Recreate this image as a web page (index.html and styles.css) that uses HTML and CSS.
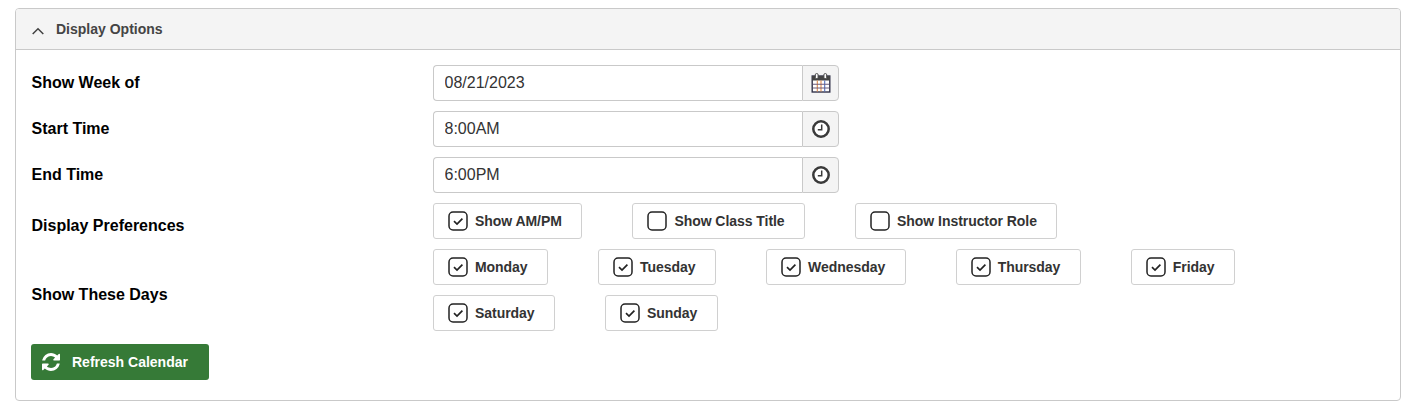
FILE: index.html
```html
<!DOCTYPE html>
<html lang="en">
<head>
<meta charset="utf-8">
<title>Display Options</title>
<link rel="stylesheet" href="styles.css">
</head>
<body>
<section class="panel">
  <header class="panel-head">
    <svg class="chevron" viewBox="0 0 12 8" aria-hidden="true"><path d="M.7 7 6 1.700 11.300 7" fill="none" stroke="#444" stroke-width="1.500"/></svg>
    <h2>Display Options</h2>
  </header>
  <div class="panel-body">
    <div class="row">
      <label class="label">Show Week of</label>
      <div class="input-group">
        <input class="field" type="text" value="08/21/2023">
        <span class="addon">
          <svg class="cal" viewBox="0 0 20 20" aria-hidden="true">
            <rect x="1.200" y="3" width="17.600" height="16" fill="#fff" stroke="#33334a" stroke-width="1.400"/>
            <rect x="1" y="3" width="18" height="4.500" fill="#444"/>
            <rect x="4.300" y=".6" width="2.800" height="5" rx="1.200" fill="#fff" stroke="#444"/>
            <rect x="12.900" y=".6" width="2.800" height="5" rx="1.200" fill="#fff" stroke="#444"/>
            <path d="M6.300 7.500v11M10 7.500v11" stroke="#e08a4a" stroke-width="1.100"/>
            <path d="M13.700 7.500v11" stroke="#4f6fc0" stroke-width="1.100"/>
            <path d="M2 11.200h16M2 15h16" stroke="#6b5a7a" stroke-width="1.100"/>
          </svg>
        </span>
      </div>
    </div>
    <div class="row">
      <label class="label">Start Time</label>
      <div class="input-group">
        <input class="field" type="text" value="8:00AM">
        <span class="addon">
          <svg class="clock" viewBox="0 0 18 18" aria-hidden="true"><circle cx="9" cy="9" r="7.700" fill="#fff" stroke="#3a3a3a" stroke-width="2.500"/><path d="M9.700 4.500v5.300H5.800" fill="none" stroke="#3a3a3a" stroke-width="1.500"/></svg>
        </span>
      </div>
    </div>
    <div class="row">
      <label class="label">End Time</label>
      <div class="input-group">
        <input class="field" type="text" value="6:00PM">
        <span class="addon">
          <svg class="clock" viewBox="0 0 18 18" aria-hidden="true"><circle cx="9" cy="9" r="7.700" fill="#fff" stroke="#3a3a3a" stroke-width="2.500"/><path d="M9.700 4.500v5.300H5.800" fill="none" stroke="#3a3a3a" stroke-width="1.500"/></svg>
        </span>
      </div>
    </div>
    <div class="row">
      <label class="label label-low">Display Preferences</label>
      <div class="chips">
        <span class="chip"><svg class="box" viewBox="0 0 20 20"><rect x="1" y="1" width="18" height="18" rx="4" fill="#fff" stroke="#222" stroke-width="1.500"/><path d="M6 10.200l3 2.800 5.400-5.400" fill="none" stroke="#222" stroke-width="1.700"/></svg>Show AM/PM</span>
        <span class="chip"><svg class="box" viewBox="0 0 20 20"><rect x="1" y="1" width="18" height="18" rx="4" fill="#fff" stroke="#222" stroke-width="1.500"/></svg>Show Class Title</span>
        <span class="chip"><svg class="box" viewBox="0 0 20 20"><rect x="1" y="1" width="18" height="18" rx="4" fill="#fff" stroke="#222" stroke-width="1.500"/></svg>Show Instructor Role</span>
      </div>
    </div>
    <div class="row">
      <label class="label label-low">Show These Days</label>
      <div class="chips">
        <span class="chip"><svg class="box" viewBox="0 0 20 20"><rect x="1" y="1" width="18" height="18" rx="4" fill="#fff" stroke="#222" stroke-width="1.500"/><path d="M6 10.200l3 2.800 5.400-5.400" fill="none" stroke="#222" stroke-width="1.700"/></svg>Monday</span>
        <span class="chip"><svg class="box" viewBox="0 0 20 20"><rect x="1" y="1" width="18" height="18" rx="4" fill="#fff" stroke="#222" stroke-width="1.500"/><path d="M6 10.200l3 2.800 5.400-5.400" fill="none" stroke="#222" stroke-width="1.700"/></svg>Tuesday</span>
        <span class="chip"><svg class="box" viewBox="0 0 20 20"><rect x="1" y="1" width="18" height="18" rx="4" fill="#fff" stroke="#222" stroke-width="1.500"/><path d="M6 10.200l3 2.800 5.400-5.400" fill="none" stroke="#222" stroke-width="1.700"/></svg>Wednesday</span>
        <span class="chip"><svg class="box" viewBox="0 0 20 20"><rect x="1" y="1" width="18" height="18" rx="4" fill="#fff" stroke="#222" stroke-width="1.500"/><path d="M6 10.200l3 2.800 5.400-5.400" fill="none" stroke="#222" stroke-width="1.700"/></svg>Thursday</span>
        <span class="chip"><svg class="box" viewBox="0 0 20 20"><rect x="1" y="1" width="18" height="18" rx="4" fill="#fff" stroke="#222" stroke-width="1.500"/><path d="M6 10.200l3 2.800 5.400-5.400" fill="none" stroke="#222" stroke-width="1.700"/></svg>Friday</span>
        <span class="chip"><svg class="box" viewBox="0 0 20 20"><rect x="1" y="1" width="18" height="18" rx="4" fill="#fff" stroke="#222" stroke-width="1.500"/><path d="M6 10.200l3 2.800 5.400-5.400" fill="none" stroke="#222" stroke-width="1.700"/></svg>Saturday</span>
        <span class="chip"><svg class="box" viewBox="0 0 20 20"><rect x="1" y="1" width="18" height="18" rx="4" fill="#fff" stroke="#222" stroke-width="1.500"/><path d="M6 10.200l3 2.800 5.400-5.400" fill="none" stroke="#222" stroke-width="1.700"/></svg>Sunday</span>
      </div>
    </div>
    <button class="refresh" type="button">
      <svg class="refresh-icon" viewBox="128 128 1536 1536" aria-hidden="true"><path fill="#fff" d="M1639 1056q0 5-1 7-64 268-268 434.5t-478 166.5q-146 0-282.5-55t-243.5-157l-129 129q-19 19-45 19t-45-19-19-45v-448q0-26 19-45t45-19h448q26 0 45 19t19 45-19 45l-137 137q71 66 161 102t187 36q134 0 250-65t186-179q11-17 53-117 8-23 30-23h192q13 0 22.5 9.5t9.5 22.5zm25-800v448q0 26-19 45t-45 19h-448q-26 0-45-19t-19-45 19-45l138-138q-148-137-349-137-134 0-250 65t-186 179q-11 17-53 117-8 23-30 23h-199q-13 0-22.5-9.5t-9.5-22.5v-7q65-268 270-434.5t480-166.5q146 0 284 55.5t245 156.5l130-129q19-19 45-19t45 19 19 45z"/></svg>
      Refresh Calendar
    </button>
  </div>
</section>
</body>
</html>
```
FILE: styles.css
```css
* { box-sizing: border-box; }
html, body { background: #fff; }
body {
  margin: 8px 14px 0 15px;
  font-family: "Liberation Sans", Arial, sans-serif;
  color: #000;
}
.panel {
  border: 1px solid #c9c9c9;
  border-radius: 4px;
  height: 393px;
  overflow: hidden;
}
.panel-head {
  display: flex;
  align-items: center;
  height: 41px;
  padding-left: 16px;
  background: #f4f4f4;
  border-bottom: 1px solid #c9c9c9;
}
.panel-head h2 {
  margin: 0 0 0 12px;
  font-size: 14px;
  font-weight: 700;
  color: #444;
}
.chevron { width: 12px; height: 8px; margin-top: 3px; }
.panel-body {
  display: flex;
  flex-direction: column;
  align-items: flex-start;
  gap: 10px;
  padding: 15px 15px 0 15px;
}
.row {
  display: grid;
  grid-template-columns: 402px 952px;
  align-items: center;
  width: 100%;
}
.label {
  font-size: 16px;
  font-weight: 700;
  padding-left: .5px;
}
.label-low { padding-top: 10px; }
.input-group { display: flex; width: 406px; height: 36px; }
.field {
  flex: 1;
  min-width: 0;
  padding: 0 10px 0 10.5px;
  border: 1px solid #c9c9c9;
  border-right: 0;
  border-radius: 4px 0 0 4px;
  font: 16px "Liberation Sans", Arial, sans-serif;
  color: #333;
  background: #fff;
}
.addon {
  display: flex;
  align-items: center;
  justify-content: center;
  width: 37px;
  border: 1px solid #c9c9c9;
  border-radius: 0 4px 4px 0;
  background: #f4f4f4;
}
.cal { width: 20px; height: 20px; }
.clock { width: 18px; height: 18px; }
.chips { display: flex; flex-wrap: wrap; gap: 10px 50px; }
.chip {
  display: inline-flex;
  align-items: center;
  height: 36px;
  padding: 0 19.5px 0 14px;
  border: 1px solid #d0d0d0;
  border-radius: 3px;
  font-size: 14px;
  font-weight: 700;
  letter-spacing: -.05px;
  color: #333;
  background: #fff;
}
.box { width: 20px; height: 20px; margin-right: 7px; flex: none; }
.refresh {
  display: inline-flex;
  align-items: center;
  height: 36px;
  width: 178px;
  margin-top: 3px;
  padding: 0 0 0 11px;
  border: 0;
  border-radius: 3px;
  background: #367a37;
  color: #fff;
  font: 700 14px "Liberation Sans", Arial, sans-serif;
}
.refresh-icon { width: 18px; height: 18px; margin-right: 12px; }
```
